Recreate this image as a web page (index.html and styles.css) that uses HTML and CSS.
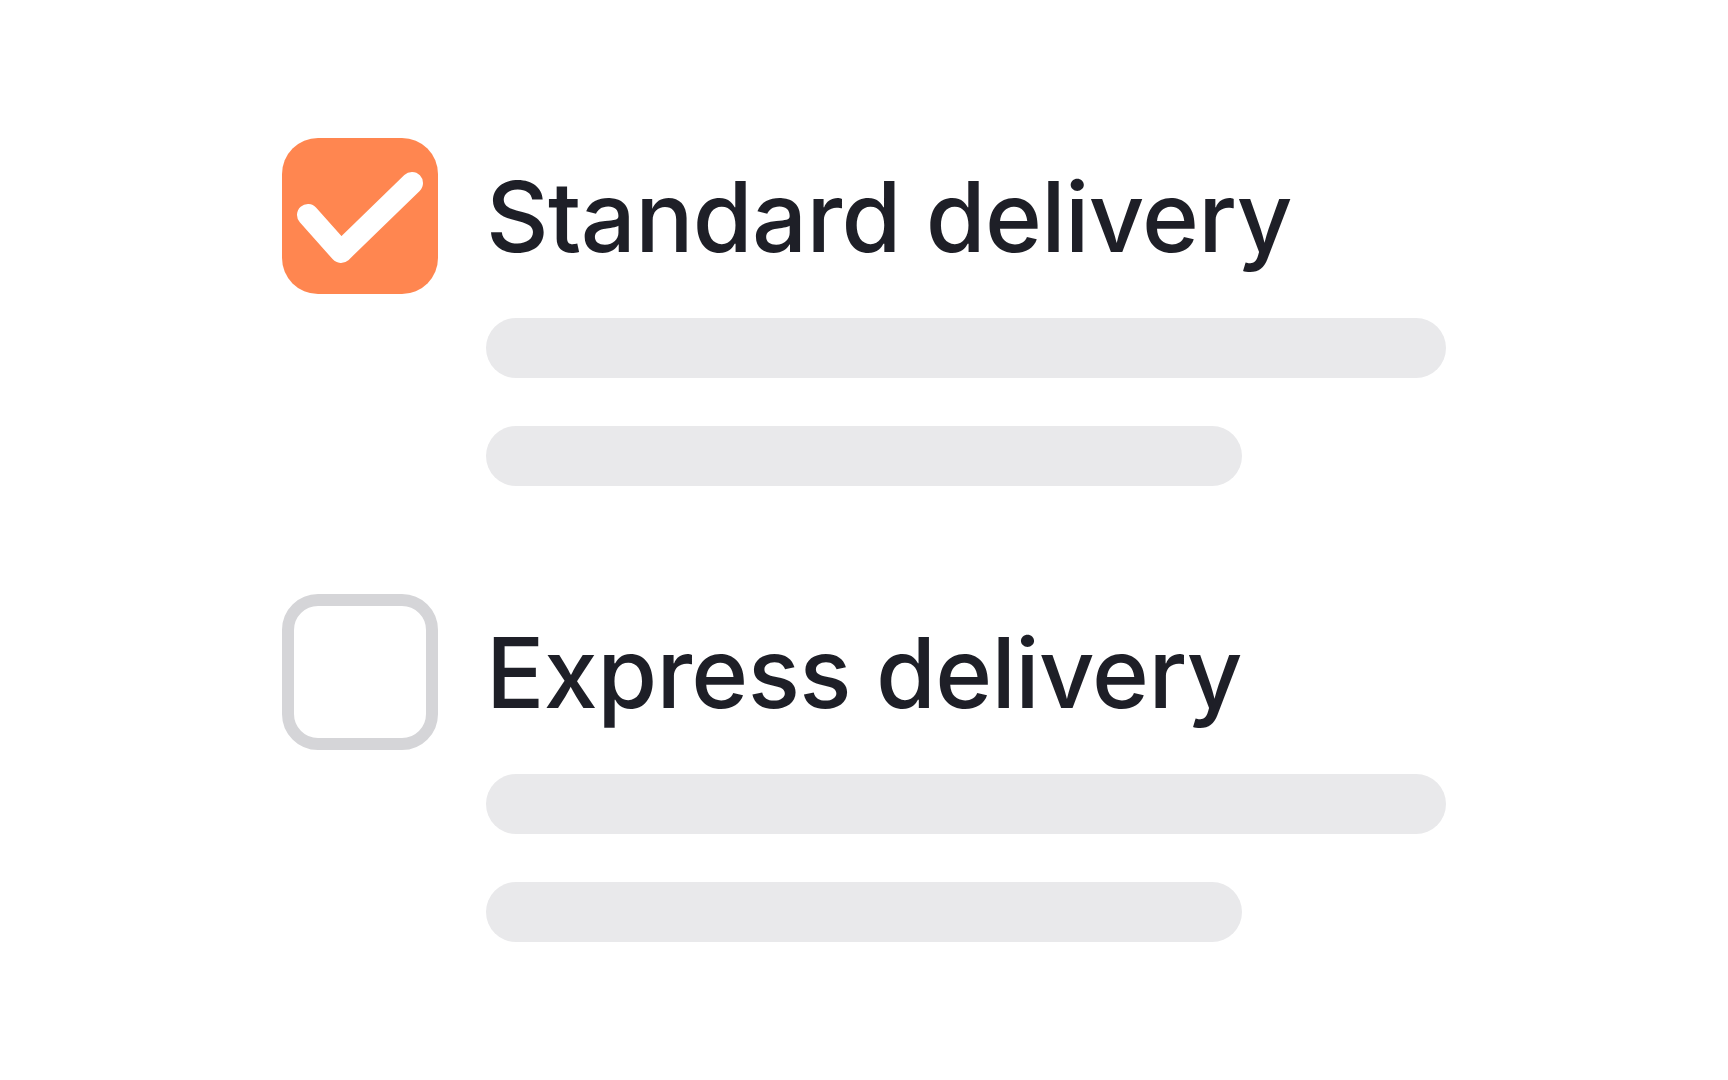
FILE: index.html
```html
<!DOCTYPE html>
<html lang="en">
<head>
<meta charset="utf-8">
<title>Delivery options</title>
<link rel="stylesheet" href="styles.css">
</head>
<body>
<main class="list">
  <section class="option">
    <div class="box box-checked">
      <svg class="check" viewBox="0 0 156 156" width="156" height="156" aria-hidden="true">
        <polyline points="26,77 59,114 130,45" fill="none" stroke="#ffffff" stroke-width="22" stroke-linecap="round" stroke-linejoin="round"/>
      </svg>
    </div>
    <h2 class="title">Standard delivery</h2>
    <div class="lines">
      <div class="line line-full"></div>
      <div class="line line-short"></div>
    </div>
  </section>
  <section class="option">
    <div class="box box-empty"></div>
    <h2 class="title">Express delivery</h2>
    <div class="lines">
      <div class="line line-full"></div>
      <div class="line line-short"></div>
    </div>
  </section>
</main>
</body>
</html>
```

FILE: styles.css
```css
html, body {
  margin: 0;
  padding: 0;
  background: #ffffff;
}

body {
  height: 100vh;
  display: flex;
  align-items: center;
  justify-content: center;
  font-family: Inter, "Noto Sans", sans-serif;
}

.list {
  width: 1164px;
  display: flex;
  flex-direction: column;
  gap: 108px;
}

.option {
  display: grid;
  grid-template-columns: 156px 1fr;
  column-gap: 48px;
  row-gap: 24px;
}

.box {
  width: 156px;
  height: 156px;
  box-sizing: border-box;
  border-radius: 36px;
}

.box-checked {
  background: #ff8650;
}

.check {
  display: block;
}

.box-empty {
  border: 12px solid #d5d5d8;
  background: #ffffff;
}

.title {
  margin: 0;
  align-self: center;
  font-size: 97px;
  line-height: 1;
  font-weight: 500;
  color: #1e1f27;
  letter-spacing: -0.7px;
}

.lines {
  grid-column: 2;
  display: flex;
  flex-direction: column;
  gap: 48px;
}

.line {
  height: 60px;
  border-radius: 30px;
  background: #e9e9eb;
}

.line-full {
  width: 100%;
}

.line-short {
  width: 756px;
}
```
